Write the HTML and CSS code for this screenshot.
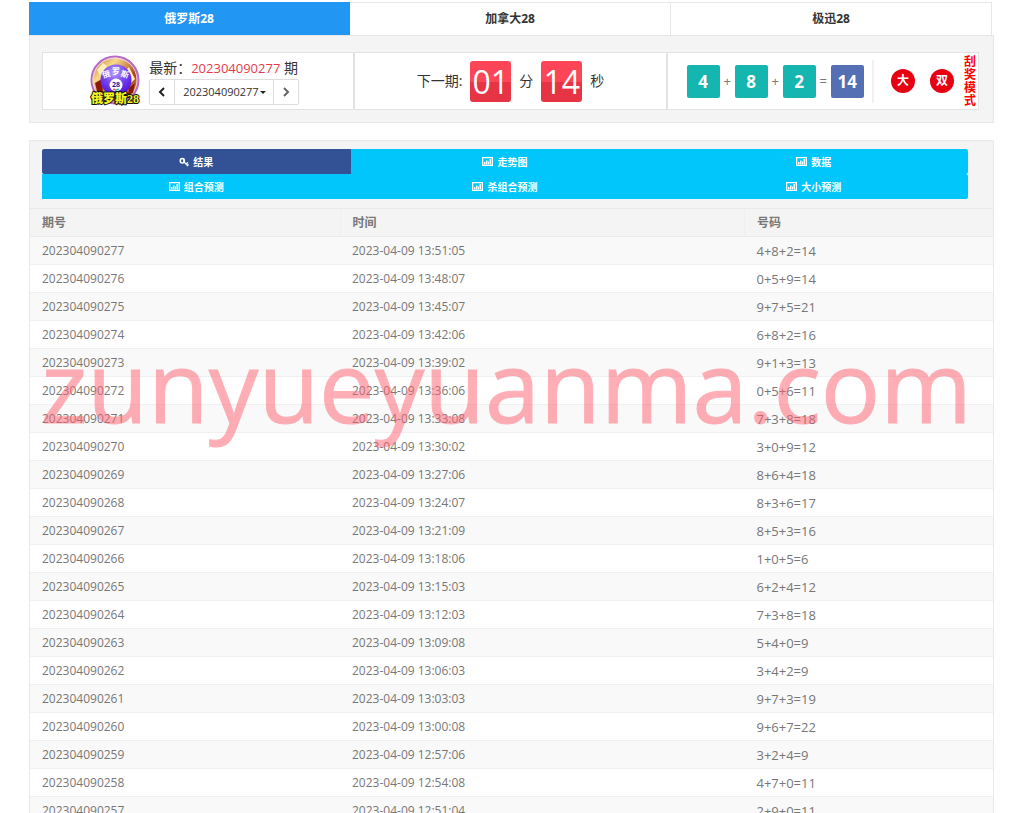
FILE: index.html
```html
<!DOCTYPE html>
<html lang="zh-CN">
<head>
<meta charset="utf-8">
<title>俄罗斯28</title>
<link rel="stylesheet" href="styles.css">
</head>
<body>
<svg class="defs" aria-hidden="true">
  <symbol id="chart" viewBox="0 0 22 18"><path fill="none" stroke="currentColor" stroke-width="2.600" d="M1.300 1.300h19.400v15.400H1.300z"/><path fill="currentColor" d="M4 10h3v5H4zM8 7h3v8H8zM12 9h2v6h-2zM15 4h3v11h-3z"/></symbol>
  <symbol id="key" viewBox="0 0 20 20"><ellipse cx="6.500" cy="7.500" rx="4" ry="4.500" fill="none" stroke="currentColor" stroke-width="3"/><path fill="none" stroke="currentColor" stroke-width="2.600" d="M9 3l2 8 7 7M14 14l4-3M16 18l3-3"/></symbol>
</svg>
<main class="page">
  <nav class="tabs">
    <a class="tab tab-active" href="#russia">俄罗斯28</a>
    <a class="tab" href="#canada">加拿大28</a>
    <a class="tab" href="#speed">极迅28</a>
  </nav>
  <section class="summary">
    <div class="cell latest">
      <svg class="logo" viewBox="0 0 50 52" role="img" aria-label="俄罗斯28">
        <defs>
          <radialGradient id="ball" cx=".45" cy=".25" r=".8"><stop offset="0" stop-color="#b9a2ff"/><stop offset=".45" stop-color="#7948ee"/><stop offset="1" stop-color="#4b08dc"/></radialGradient>
          <linearGradient id="gold" x1="0" y1="0" x2="1" y2="1"><stop offset="0" stop-color="#b66b24"/><stop offset=".3" stop-color="#f8d98b"/><stop offset=".65" stop-color="#a74213"/><stop offset="1" stop-color="#efb85b"/></linearGradient>
        </defs>
        <circle cx="25" cy="25" r="23.500" fill="url(#gold)" stroke="#b76bc8" stroke-width="2"/>
        <circle cx="25" cy="25" r="22" fill="none" stroke="#f0d8f4" stroke-width="1"/>
        <path fill="#fff0bb" d="M7 15l6-7 4 3-7 9zM39 12l6 12-4 4-5-13z"/>
        <path fill="#8c1808" d="M5 28l7-4 1 14-6-2zM39 33l6-5-2 10-5 2z"/>
        <circle cx="26" cy="25" r="15.500" fill="url(#ball)"/>
        <circle cx="26" cy="30" r="6.500" fill="#fff"/>
        <g class="logo-small"><text x="17" y="22" transform="rotate(-14 17 22)">俄</text><text x="26" y="19">罗</text><text x="34" y="22" transform="rotate(16 34 22)">斯</text></g>
        <text class="logo-number" x="26" y="32">28</text>
        <circle cx="24" cy="34.500" r="1" fill="#e44"/><circle cx="26" cy="35" r="1" fill="#3b4"/><circle cx="28" cy="34.500" r="1" fill="#38e"/>
        <text class="logo-name" x="25" y="48">俄罗斯28</text>
      </svg>
      <div class="issue">
        <div class="issue-title">最新：<span class="issue-number">202304090277</span> 期</div>
        <div class="picker">
          <button class="step" type="button" aria-label="上一期"><svg viewBox="0 0 8 10"><path d="M6 1L2 5l4 4"/></svg></button>
          <div class="select-wrap">
            <select class="select" aria-label="期号"><option>202304090277</option><option>202304090276</option><option>202304090275</option></select>
            <svg class="caret" viewBox="0 0 6 3"><path d="M0 0h6L3 3z"/></svg>
          </div>
          <button class="step step-next" type="button" aria-label="下一期"><svg viewBox="0 0 8 10"><path d="M2 1l4 4-4 4"/></svg></button>
        </div>
      </div>
    </div>
    <div class="cell countdown">
      <span>下一期:</span><span class="digits">01</span><span>分</span><span class="digits">14</span><span>秒</span>
    </div>
    <div class="cell result">
      <div class="sum">
        <span class="number">4</span><span class="sign">+</span><span class="number">8</span><span class="sign">+</span><span class="number">2</span><span class="sign">=</span><span class="number number-total">14</span>
      </div>
      <div class="marks"><span class="mark">大</span><span class="mark">双</span></div>
      <a class="scratch" href="#scratch">刮奖模式</a>
    </div>
  </section>
  <section class="records">
    <div class="actions">
      <button class="action action-active" type="button"><svg class="icon"><use href="#key"/></svg>结果</button>
      <button class="action" type="button"><svg class="icon"><use href="#chart"/></svg>走势图</button>
      <button class="action action-end" type="button"><svg class="icon"><use href="#chart"/></svg>数据</button>
      <button class="action" type="button"><svg class="icon"><use href="#chart"/></svg>组合预测</button>
      <button class="action" type="button"><svg class="icon"><use href="#chart"/></svg>杀组合预测</button>
      <button class="action action-end" type="button"><svg class="icon"><use href="#chart"/></svg>大小预测</button>
    </div>
    <table class="table">
      <thead><tr><th class="col-issue">期号</th><th class="col-time">时间</th><th>号码</th></tr></thead>
      <tbody>
        <tr><td>202304090277</td><td>2023-04-09 13:51:05</td><td>4+8+2=14</td></tr>
        <tr><td>202304090276</td><td>2023-04-09 13:48:07</td><td>0+5+9=14</td></tr>
        <tr><td>202304090275</td><td>2023-04-09 13:45:07</td><td>9+7+5=21</td></tr>
        <tr><td>202304090274</td><td>2023-04-09 13:42:06</td><td>6+8+2=16</td></tr>
        <tr><td>202304090273</td><td>2023-04-09 13:39:02</td><td>9+1+3=13</td></tr>
        <tr><td>202304090272</td><td>2023-04-09 13:36:06</td><td>0+5+6=11</td></tr>
        <tr><td>202304090271</td><td>2023-04-09 13:33:08</td><td>7+3+8=18</td></tr>
        <tr><td>202304090270</td><td>2023-04-09 13:30:02</td><td>3+0+9=12</td></tr>
        <tr><td>202304090269</td><td>2023-04-09 13:27:06</td><td>8+6+4=18</td></tr>
        <tr><td>202304090268</td><td>2023-04-09 13:24:07</td><td>8+3+6=17</td></tr>
        <tr><td>202304090267</td><td>2023-04-09 13:21:09</td><td>8+5+3=16</td></tr>
        <tr><td>202304090266</td><td>2023-04-09 13:18:06</td><td>1+0+5=6</td></tr>
        <tr><td>202304090265</td><td>2023-04-09 13:15:03</td><td>6+2+4=12</td></tr>
        <tr><td>202304090264</td><td>2023-04-09 13:12:03</td><td>7+3+8=18</td></tr>
        <tr><td>202304090263</td><td>2023-04-09 13:09:08</td><td>5+4+0=9</td></tr>
        <tr><td>202304090262</td><td>2023-04-09 13:06:03</td><td>3+4+2=9</td></tr>
        <tr><td>202304090261</td><td>2023-04-09 13:03:03</td><td>9+7+3=19</td></tr>
        <tr><td>202304090260</td><td>2023-04-09 13:00:08</td><td>9+6+7=22</td></tr>
        <tr><td>202304090259</td><td>2023-04-09 12:57:06</td><td>3+2+4=9</td></tr>
        <tr><td>202304090258</td><td>2023-04-09 12:54:08</td><td>4+7+0=11</td></tr>
        <tr><td>202304090257</td><td>2023-04-09 12:51:04</td><td>2+9+0=11</td></tr>
      </tbody>
    </table>
    <div class="watermark">zunyueyuanma.com</div>
  </section>
</main>
</body>
</html>
```

FILE: styles.css
```css
* { box-sizing: border-box; }
body {
  margin: 0;
  height: 100vh;
  overflow: hidden;
  background: #fff;
  color: #333;
  font: 12px/16px "Open Sans", "Noto Sans CJK SC", sans-serif;
}
button, select { font: inherit; color: inherit; margin: 0; }
.defs { position: absolute; width: 0; height: 0; }
.page { padding: 2px 30px 0 29px; }

.tabs { display: grid; grid-template-columns: repeat(3, 1fr); height: 33px; margin-right: 2px; }
.tab {
  display: flex;
  align-items: center;
  justify-content: center;
  border: solid #e7e7e7;
  border-width: 1px 1px 0 0;
  color: #333;
  font-weight: 700;
  text-decoration: none;
}
.tab-active { background: #2196f3; border-color: #2196f3; color: #fff; }

.summary {
  display: grid;
  grid-template-columns: repeat(3, 1fr);
  padding: 16px 14px 12px 12px;
  border: 1px solid #e7e7e7;
  background: #f4f4f4;
}
.cell {
  display: flex;
  align-items: center;
  justify-content: center;
  height: 58px;
  border: 1px solid #e2e2e2;
  background: #fff;
}
.latest { gap: 9px; padding-right: 7px; }
.logo { width: 50px; height: 52px; }
.logo-small { fill: #fff; font: 700 8px "Noto Sans CJK SC", sans-serif; text-anchor: middle; }
.logo-number { fill: #221a9b; font: 700 7px "Open Sans", sans-serif; text-anchor: middle; }
.logo-name {
  fill: #f4f420;
  stroke: #111;
  stroke-width: 2px;
  paint-order: stroke;
  font: 900 12px "Liberation Serif", "Noto Sans CJK SC", serif;
  text-anchor: middle;
}
.issue-title { font-size: 14px; line-height: 22px; white-space: nowrap; }
.issue-number { color: #e83a4b; font-size: 13px; }
.picker { display: flex; height: 26px; border: 1px solid #ddd; border-radius: 2px; }
.step { display: flex; align-items: center; justify-content: center; width: 24px; padding: 0; border: 0; background: #fff; }
.step svg { width: 8px; height: 10px; fill: none; stroke: #222; stroke-width: 2px; }
.step-next svg { stroke: #666; }
.select-wrap { position: relative; display: flex; border: solid #ddd; border-width: 0 1px; }
.select { width: 98px; padding: 0 0 0 8px; border: 0; background: #fff; appearance: none; font-size: 11px; }
.caret { position: absolute; right: 7px; top: 11px; width: 6px; height: 3px; fill: #222; }

.countdown { gap: 8px; font-size: 14px; }
.digits {
  width: 41px;
  border-radius: 3px;
  background: linear-gradient(#fc4557 52%, #e73444 52%);
  color: #fff;
  font-size: 32px;
  line-height: 41px;
  text-align: center;
}

.result { padding: 0 2px 0 19px; }
.sum { display: flex; align-items: center; height: 43px; padding-right: 8px; border-right: 2px solid #f1f1f1; }
.number {
  width: 33px;
  border-radius: 2px;
  background: #15b5b0;
  color: #fff;
  font-size: 17px;
  font-weight: 700;
  line-height: 33px;
  text-align: center;
}
.number-total { background: #556fb5; }
.sign { width: 15px; color: #777; font-size: 13px; line-height: 20px; text-align: center; }
.marks { display: flex; flex: 1; justify-content: flex-end; gap: 15px; padding-right: 10px; }
.mark { width: 24px; border-radius: 50%; background: #e60012; color: #fff; font-weight: 700; line-height: 24px; text-align: center; }
.scratch { width: 12px; color: #f00; font-weight: 700; line-height: 13px; text-decoration: none; }

.records { position: relative; margin-top: 17px; border: 1px solid #e9e9e9; background: #f4f4f4; }
.actions { display: grid; grid-template-columns: repeat(3, 1fr); margin: 8px 25px 9px 12px; }
.action {
  display: flex;
  align-items: center;
  justify-content: center;
  gap: 4px;
  height: 25px;
  padding: 0;
  border: 0;
  border-radius: 2px 0 0 2px;
  background: #00c6fc;
  color: #fff;
  font-size: 10px;
  font-weight: 700;
}
.action + .action { border-radius: 0; }
.action.action-end { border-radius: 0 2px 2px 0; }
.action-active { background: #325295; }
.icon { width: 11px; height: 9px; }
.action-active .icon { width: 10px; height: 10px; }

.table { width: 100%; border-collapse: collapse; table-layout: fixed; color: #777; }
.table th { height: 28px; padding: 0 12px; border: solid #eaeaea; border-width: 1px 0; text-align: left; }
.table th + th { border-left: 1px solid #efefef; }
.table td { height: 28px; padding: 0 12px; border-bottom: 1px solid #f0f0f0; background: #fff; }
.table td:last-child { font-size: 13px; }
.table tr:nth-child(odd) td { background: #f9f9f9; }
.col-issue { width: 310px; }
.col-time { width: 42%; }
.watermark {
  position: absolute;
  top: 179px;
  left: 0;
  right: 10px;
  color: #ff6070;
  -webkit-text-stroke: 1px #ff6070;
  font-size: 99px;
  line-height: 130px;
  opacity: .5;
  text-align: center;
  pointer-events: none;
  white-space: nowrap;
}
```
